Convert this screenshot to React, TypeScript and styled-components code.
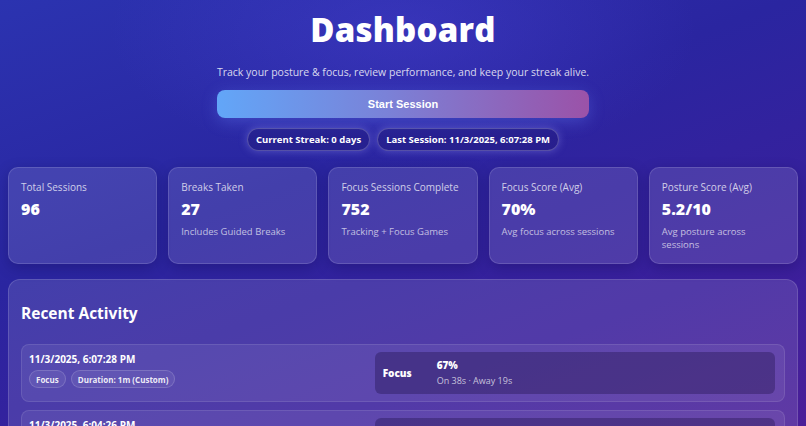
import React from "react";
import styled, { createGlobalStyle } from "styled-components";

const Global = createGlobalStyle`
  html, body { margin: 0; padding: 0; }
  body {
    font-family: "Open Sans", "Noto Sans", sans-serif;
    color: #fff;
    background: #2a2aa6;
    overflow: hidden;
  }
`;

const Page = styled.div`
  width: 806px;
  height: 426px;
  box-sizing: border-box;
  padding: 0 8px;
  overflow: hidden;
  background:
    radial-gradient(ellipse 420px 200px at 50% 30px, rgba(80, 70, 220, 0.35), transparent 70%),
    linear-gradient(160deg, #2b33b0 0%, #2a25a0 40%, #3a1f9c 75%, #4a1e98 100%);
`;

const Hero = styled.header`
  width: fit-content;
  margin: 0 auto;
  padding-top: 9px;
  display: flex;
  flex-direction: column;
  align-items: stretch;
  text-align: center;
`;

const Title = styled.h1`
  margin: 0;
  font-size: 33px;
  font-weight: 800;
  line-height: 42px;
  letter-spacing: 0.2px;
`;

const Subtitle = styled.p`
  margin: 14px 0 0;
  font-size: 10.5px;
  line-height: 14px;
  color: rgba(255, 255, 255, 0.82);
`;

const StartButton = styled.button`
  margin-top: 11px;
  height: 28px;
  border: none;
  border-radius: 8px;
  background: linear-gradient(90deg, #62a6f8 0%, #7a82d8 45%, #9b52a8 100%);
  color: #fff;
  font-family: "Liberation Sans", Arial, sans-serif;
  font-weight: 700;
  font-size: 11px;
  box-shadow: 0 4px 16px rgba(110, 140, 255, 0.3);
`;

const Pills = styled.div`
  margin-top: 10px;
  display: flex;
  justify-content: center;
  gap: 7px;
`;

const Pill = styled.span`
  height: 23px;
  box-sizing: border-box;
  display: inline-flex;
  align-items: center;
  padding: 0 8px;
  border-radius: 999px;
  border: 1px solid rgba(255, 255, 255, 0.22);
  background: rgba(30, 20, 110, 0.35);
  box-shadow: 0 0 8px rgba(170, 170, 255, 0.35);
  font-size: 9.5px;
  font-weight: 700;
`;

const Stats = styled.section`
  margin-top: 16px;
  display: grid;
  grid-template-columns: repeat(5, 1fr);
  gap: 11px;
`;

const Card = styled.div`
  height: 97px;
  box-sizing: border-box;
  padding: 12px 12px;
  border-radius: 10px;
  background: rgba(255, 255, 255, 0.12);
  border: 1px solid rgba(255, 255, 255, 0.14);
  box-shadow: 0 4px 14px rgba(10, 5, 60, 0.25);
`;

const CardLabel = styled.div`
  font-size: 10px;
  line-height: 14px;
  color: rgba(255, 255, 255, 0.75);
`;

const CardValue = styled.div`
  margin-top: 5px;
  font-size: 16px;
  line-height: 20px;
  font-weight: 800;
`;

const CardSub = styled.div`
  margin-top: 6px;
  font-size: 9.5px;
  line-height: 13px;
  color: rgba(255, 255, 255, 0.68);
`;

const Panel = styled.section`
  margin-top: 15px;
  padding: 13px 12px;
  border-radius: 12px;
  background: rgba(255, 255, 255, 0.12);
  border: 1px solid rgba(255, 255, 255, 0.14);
`;

const PanelTitle = styled.h2`
  margin: 9px 0 0;
  font-size: 15.5px;
  line-height: 22px;
  font-weight: 700;
`;

const List = styled.div`
  margin-top: 20px;
  display: flex;
  flex-direction: column;
  gap: 8px;
`;

const Item = styled.div`
  display: grid;
  grid-template-columns: 1fr 1.2fr;
  gap: 12px;
  align-items: center;
  padding: 7px 9px 7px 7px;
  border-radius: 8px;
  background: rgba(255, 255, 255, 0.07);
  border: 1px solid rgba(255, 255, 255, 0.1);
`;

const ItemMeta = styled.div`
  align-self: start;
  display: flex;
  flex-direction: column;
  align-items: flex-start;
  gap: 4px;
`;

const ItemDate = styled.div`
  font-size: 10px;
  font-weight: 700;
  line-height: 14px;
`;

const Tags = styled.div`
  display: flex;
  gap: 5px;
`;

const Tag = styled.span`
  height: 18px;
  box-sizing: border-box;
  display: inline-flex;
  align-items: center;
  padding: 0 6px;
  border-radius: 999px;
  border: 1px solid rgba(255, 255, 255, 0.16);
  background: rgba(255, 255, 255, 0.07);
  font-size: 8px;
  font-weight: 700;
  color: rgba(255, 255, 255, 0.9);
`;

const Result = styled.div`
  height: 42px;
  box-sizing: border-box;
  display: grid;
  grid-template-columns: 54px 1fr;
  align-items: center;
  padding: 0 8px;
  border-radius: 6px;
  background: rgba(30, 15, 70, 0.35);
`;

const ResultLabel = styled.div`
  font-size: 10px;
  font-weight: 800;
`;

const ResultValue = styled.div`
  font-size: 10px;
  font-weight: 800;
  line-height: 13px;
`;

const ResultDetail = styled.div`
  margin-top: 3px;
  font-size: 9px;
  line-height: 12px;
  color: rgba(255, 255, 255, 0.7);
`;

const stats = [
  { label: "Total Sessions", value: "96", sub: "" },
  { label: "Breaks Taken", value: "27", sub: "Includes Guided Breaks" },
  { label: "Focus Sessions Complete", value: "752", sub: "Tracking + Focus Games" },
  { label: "Focus Score (Avg)", value: "70%", sub: "Avg focus across sessions" },
  { label: "Posture Score (Avg)", value: "5.2/10", sub: "Avg posture across sessions" },
];

const activity = [
  { date: "11/3/2025, 6:07:28 PM", type: "Focus", duration: "Duration: 1m (Custom)", score: "67%", detail: "On 38s · Away 19s" },
  { date: "11/3/2025, 6:04:26 PM", type: "Focus", duration: "Duration: 1m (Custom)", score: "71%", detail: "On 41s · Away 17s" },
];

export default function App() {
  return (
    <Page>
      <Global />
      <Hero>
        <Title>Dashboard</Title>
        <Subtitle>Track your posture &amp; focus, review performance, and keep your streak alive.</Subtitle>
        <StartButton>Start Session</StartButton>
        <Pills>
          <Pill>Current Streak: 0 days</Pill>
          <Pill>Last Session: 11/3/2025, 6:07:28 PM</Pill>
        </Pills>
      </Hero>
      <Stats>
        {stats.map((s) => (
          <Card key={s.label}>
            <CardLabel>{s.label}</CardLabel>
            <CardValue>{s.value}</CardValue>
            {s.sub && <CardSub>{s.sub}</CardSub>}
          </Card>
        ))}
      </Stats>
      <Panel>
        <PanelTitle>Recent Activity</PanelTitle>
        <List>
          {activity.map((a) => (
            <Item key={a.date}>
              <ItemMeta>
                <ItemDate>{a.date}</ItemDate>
                <Tags>
                  <Tag>{a.type}</Tag>
                  <Tag>{a.duration}</Tag>
                </Tags>
              </ItemMeta>
              <Result>
                <ResultLabel>{a.type}</ResultLabel>
                <div>
                  <ResultValue>{a.score}</ResultValue>
                  <ResultDetail>{a.detail}</ResultDetail>
                </div>
              </Result>
            </Item>
          ))}
        </List>
      </Panel>
    </Page>
  );
}
